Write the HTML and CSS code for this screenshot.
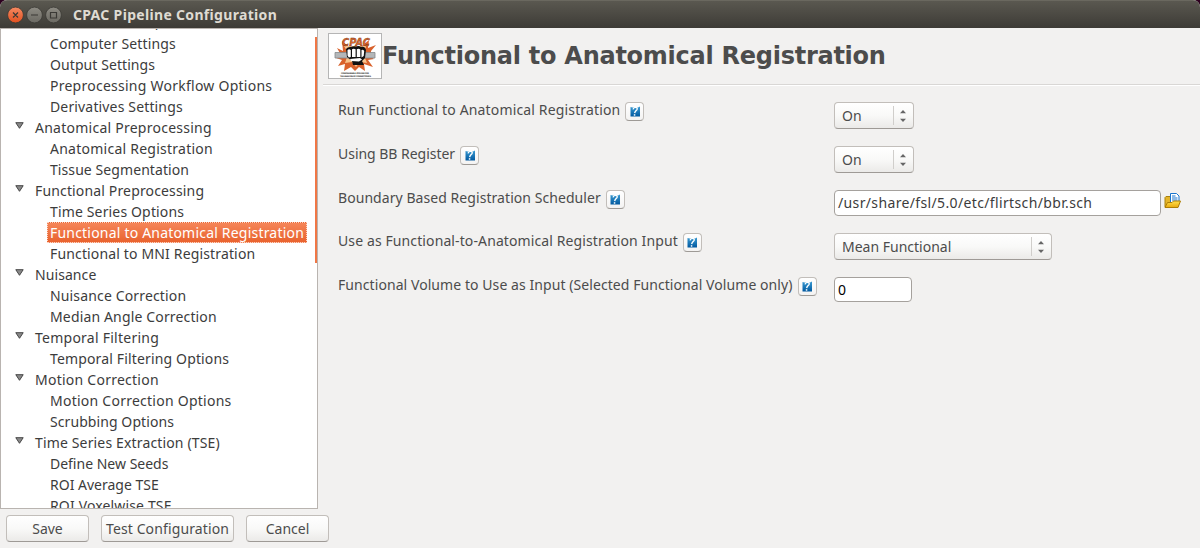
FILE: index.html
```html
<!DOCTYPE html>
<html lang="en">
<head>
<meta charset="utf-8">
<title>CPAC Pipeline Configuration</title>
<link rel="stylesheet" href="styles.css">
</head>
<body>
<svg width="0" height="0" class="defs">
  <defs>
    <linearGradient id="blue" x1="0" y1="0" x2="0" y2="1"><stop offset="0" stop-color="#3b9bd2"/><stop offset="1" stop-color="#00589f"/></linearGradient>
    <linearGradient id="gold" x1="0" y1="0" x2="0" y2="1"><stop offset="0" stop-color="#ffe14e"/><stop offset="1" stop-color="#e9a90c"/></linearGradient>
    <symbol id="help" viewBox="0 0 10 11">
      <path d="M.5 1l2 .5h5.500l2-1V10.500H.5z" fill="url(#blue)"/>
      <path d="M3 3.400C3.400 1.800 4.400 1.400 5.500 1.400c1.400 0 2 .7 1.600 1.900C6.600 4.600 5 5 4.700 7.200" fill="none" stroke="#fff" stroke-width="1.400"/>
      <rect x="3.800" y="8.200" width="1.500" height="1.500" fill="#fff"/>
    </symbol>
    <symbol id="spin" viewBox="0 0 6 12"><path d="M0 3.300 3 0l3 3.300zM0 8.700 3 12l3-3.300z" fill="#666"/></symbol>
    <symbol id="tri" viewBox="0 0 9 7"><path d="M.8.700h7.400L4.500 6.300z" fill="#8a8a8a" stroke="#454545"/></symbol>
  </defs>
</svg>
<div class="window">
  <header class="titlebar">
    <svg class="controls" width="56" height="18" viewBox="0 0 56 18">
      <defs><linearGradient id="cl" x1="0" y1="0" x2="0" y2="1"><stop offset="0" stop-color="#f58a62"/><stop offset="1" stop-color="#e2501f"/></linearGradient>
      <linearGradient id="gr" x1="0" y1="0" x2="0" y2="1"><stop offset="0" stop-color="#8d8b83"/><stop offset="1" stop-color="#6b6962"/></linearGradient></defs>
      <circle cx="9.500" cy="9" r="7.900" fill="url(#cl)" stroke="#3b3a35" stroke-width=".8"/>
      <circle cx="28.500" cy="9" r="7.900" fill="url(#gr)" stroke="#3b3a35" stroke-width=".8"/>
      <circle cx="47.500" cy="9" r="7.900" fill="url(#gr)" stroke="#3b3a35" stroke-width=".8"/>
      <path d="M7 6.500l5 5m0-5l-5 5M25 9h7M44.500 6.500h6v5.500h-6z" fill="none" stroke="#3a3935" stroke-width="1.200"/>
    </svg>
    <h1 class="caption">CPAC Pipeline Configuration</h1>
  </header>
  <div class="body">
    <aside class="side">
      <nav class="tree">
        <ul class="items">
          <li class="group first"><svg class="tri"><use href="#tri"/></svg><span>Environment Setup</span></li>
          <li class="leaf"><span>Computer Settings</span></li>
          <li class="leaf tight"><span>Output Settings</span></li>
          <li class="leaf wide"><span>Preprocessing Workflow Options</span></li>
          <li class="leaf"><span>Derivatives Settings</span></li>
          <li class="group wide"><svg class="tri"><use href="#tri"/></svg><span>Anatomical Preprocessing</span></li>
          <li class="leaf wide"><span>Anatomical Registration</span></li>
          <li class="leaf tight"><span>Tissue Segmentation</span></li>
          <li class="group"><svg class="tri"><use href="#tri"/></svg><span>Functional Preprocessing</span></li>
          <li class="leaf"><span>Time Series Options</span></li>
          <li class="leaf selected"><span>Functional to Anatomical Registration</span></li>
          <li class="leaf"><span>Functional to MNI Registration</span></li>
          <li class="group tight"><svg class="tri"><use href="#tri"/></svg><span>Nuisance</span></li>
          <li class="leaf"><span>Nuisance Correction</span></li>
          <li class="leaf"><span>Median Angle Correction</span></li>
          <li class="group wide"><svg class="tri"><use href="#tri"/></svg><span>Temporal Filtering</span></li>
          <li class="leaf"><span>Temporal Filtering Options</span></li>
          <li class="group wide"><svg class="tri"><use href="#tri"/></svg><span>Motion Correction</span></li>
          <li class="leaf wide"><span>Motion Correction Options</span></li>
          <li class="leaf tight"><span>Scrubbing Options</span></li>
          <li class="group"><svg class="tri"><use href="#tri"/></svg><span>Time Series Extraction (TSE)</span></li>
          <li class="leaf none"><span>Define New Seeds</span></li>
          <li class="leaf none"><span>ROI Average TSE</span></li>
          <li class="leaf"><span>ROI Voxelwise TSE</span></li>
        </ul>
        <div class="scroll-thumb"></div>
      </nav>
      <div class="actions">
        <button class="btn save">Save</button>
        <button class="btn test">Test Configuration</button>
        <button class="btn cancel">Cancel</button>
      </div>
    </aside>
    <main class="main">
      <div class="head">
        <svg class="logo" width="54" height="46" viewBox="0 0 54 46">
          <rect x=".5" y=".5" width="53" height="45" fill="#fff" stroke="#b5b5b5"/>
          <path d="M14 8l6 5 14 0 7-6-1 8 8-3-5 6v6l3 2-6 1 5 7-9-3 1 7-6-4-4 4-4-4-7 4 1-7-7 2 4-6-6-2 5-3-4-7 6 3z" fill="#d9622c"/>
          <path d="M16 13h22l-1 5 4 3-4 4 2 5-7-1-4 5-4-5-7 1 2-6-4-3 4-3z" fill="#f7c48c"/>
          <path d="M7 19.500h40v5.500H7z" fill="#b4b7b9" stroke="#85888a" stroke-width=".8"/>
          <path d="M18 16q2-2.500 5-2 2-1 5-.5 3-1 5 .5 4-1 5 3l-1 8-3 3 2 4H25l-1-4-5-4z" fill="#111"/>
          <path d="M19.500 17q1.500-1.500 3.300 0v7l-2 .5-1.300-2zM24 16.200q1.800-1 3.600 0v7.800H24zM28.800 16.200q1.800-1 3.500.3V24h-3.500zM33.500 17q1.500-1 2.700 1l-.5 5-2.200 1.500zM22 26l10-1 2 1.500-3 2-8-.5z" fill="#fff"/>
          <text x="14" y="13" class="logo-word" textLength="28" lengthAdjust="spacingAndGlyphs">CPAC</text>
          <text x="13" y="40.500" class="logo-tag" textLength="28">CONFIGURABLE PIPELINE FOR</text>
          <text x="12" y="43.500" class="logo-tag" textLength="31">THE ANALYSIS OF CONNECTOMES</text>
        </svg>
        <h2 class="title">Functional to Anatomical Registration</h2>
      </div>
      <form class="form">
        <div class="row"><label class="label l1">Run Functional to Anatomical Registration</label><span class="help"><svg><use href="#help"/></svg></span></div>
        <div class="field"><div class="select short"><span>On</span><i class="sep"></i><svg class="spin"><use href="#spin"/></svg></div></div>
        <div class="row"><label class="label l2">Using BB Register</label><span class="help"><svg><use href="#help"/></svg></span></div>
        <div class="field"><div class="select short"><span>On</span><i class="sep"></i><svg class="spin"><use href="#spin"/></svg></div></div>
        <div class="row"><label class="label l3">Boundary Based Registration Scheduler</label><span class="help"><svg><use href="#help"/></svg></span></div>
        <div class="field"><div class="input path"><span>/usr/share/fsl/5.0/etc/flirtsch/bbr.sch</span></div>
          <svg class="folder" width="17" height="16" viewBox="0 0 17 16">
            <path d="M1 14V4.500l1-1h4l1 1.500h7V14z" fill="#e5b52a" stroke="#a9820c"/>
            <path d="M6.500 10V.5h6l2.500 2.500V10z" fill="#fff" stroke="#1874cd"/><path d="M8 3h3.500M8 5h5.500M8 7h5.500" stroke="#1874cd"/>
            <path d="M1 14.500l2.500-5H8l1.500-1.500h7l-2.500 6.500z" fill="url(#gold)" stroke="#ad7d06"/>
          </svg>
        </div>
        <div class="row"><label class="label l4">Use as Functional-to-Anatomical Registration Input</label><span class="help"><svg><use href="#help"/></svg></span></div>
        <div class="field"><div class="select long"><span>Mean Functional</span><i class="sep"></i><svg class="spin"><use href="#spin"/></svg></div></div>
        <div class="row"><label class="label l5">Functional Volume to Use as Input (Selected Functional Volume only)</label><span class="help"><svg><use href="#help"/></svg></span></div>
        <div class="field"><div class="input num"><span>0</span></div></div>
      </form>
    </main>
  </div>
</div>
</body>
</html>
```
FILE: styles.css
```css
* { box-sizing: border-box; }
body { margin: 0; background: #2c001e; font: 14px/21px "Noto Sans", "Open Sans", sans-serif; color: #4c4c4c; }
.defs { position: absolute; }
.window { width: 1200px; height: 548px; display: flex; flex-direction: column; background: #f2f1f0; border-radius: 7px 7px 0 0; overflow: hidden; }
.titlebar { height: 28px; flex: none; display: flex; align-items: center; padding-left: 6px; gap: 11px; background: linear-gradient(#5a5850, #3d3b36); border-top: 1px solid #6a685f; }
.caption { margin: 0; font-size: 14px; line-height: 20px; font-weight: 700; letter-spacing: .32px; color: #dfdbd2; }
.body { flex: 1; display: flex; min-height: 0; }
.side { width: 318px; flex: none; display: flex; flex-direction: column; }
.tree { height: 481px; position: relative; overflow: hidden; background: #fff; border: 1px solid #b9b4b0; color: #3c3c3c; letter-spacing: .15px; }
.items { list-style: none; margin: -17px 0 0; padding: 0; }
.group, .leaf { height: 21px; display: flex; white-space: nowrap; }
.group { padding-left: 14px; gap: 11px; }
.leaf { padding-left: 49px; }
.first { line-height: 17px; }
.none { letter-spacing: 0; }
.tight { letter-spacing: .08px; }
.wide { letter-spacing: .25px; }
.tri { width: 9px; height: 7px; margin-top: 5px; }
.selected span { margin-left: -3px; padding-left: 2px; width: 260px; line-height: 19px; letter-spacing: .2px; background: linear-gradient(#f58558, #e9632f); border: 1px dotted #fbd5c5; color: #fff; }
.scroll-thumb { position: absolute; right: -1px; top: 8px; width: 3px; height: 226px; background: #f07746; }
.actions { display: flex; padding: 6px 0 0 6px; gap: 12px; }
.btn { height: 27px; flex: none; padding: 0; font: inherit; color: #4c4c4c; border: 1px solid #c2beba; border-bottom-color: #9e9a96; border-radius: 4px; background: linear-gradient(#fff, #f9f9f8 50%, #ebeae8); white-space: nowrap; }
.save, .cancel { width: 83px; }
.test { width: 133px; letter-spacing: .12px; }
.main { flex: 1; padding-left: 5px; }
.head { height: 57px; display: flex; padding: 5px 0 0 5px; border-bottom: 1px solid #d9d7d5; box-shadow: 0 1px #fff; }
.title { margin: 0; font: 700 24px/46px "DejaVu Sans", sans-serif; color: #4c4c4c; letter-spacing: -.26px; white-space: nowrap; }
.logo-word { font: italic 900 11px "DejaVu Sans", sans-serif; fill: #d9682c; stroke: #682c12; stroke-width: .35px; }
.logo-tag { font: 700 2.2px "DejaVu Sans", sans-serif; fill: #444; }
.form { display: grid; grid-template-columns: 496px 1fr; grid-template-rows: 44px 44px 43px 44px 44px; padding: 17px 0 0 15px; }
.row { display: flex; align-items: flex-start; gap: 5px; white-space: nowrap; }
.label { line-height: 20px; margin-top: -2px; }
.l1 { letter-spacing: .15px; }
.l2 { letter-spacing: -.03px; }
.l3 { letter-spacing: .06px; }
.l4 { letter-spacing: .11px; }
.l5 { letter-spacing: .07px; }
.help { width: 19px; height: 19px; display: flex; align-items: center; justify-content: center; border: 1px solid #c2beba; border-bottom-color: #9e9a96; border-radius: 4px; background: linear-gradient(#fff, #f4f3f2); }
.help svg { width: 10px; height: 11px; }
.field { display: flex; gap: 4px; }
.select { height: 27px; display: flex; align-items: center; border: 1px solid #c2beba; border-bottom-color: #9e9a96; border-radius: 4px; background: linear-gradient(#fff, #f9f9f8 50%, #ebeae8); padding: 0 7px; }
.short { width: 80px; }
.long { width: 218px; }
.sep { width: 1px; height: 19px; margin: 0 6px 0 auto; background: #d0cecb; }
.spin { width: 6px; height: 12px; }
.input { height: 26px; line-height: 24px; padding-left: 3px; border: 1px solid #a5a19d; border-radius: 4px; background: #fff; color: #3c3c3c; }
.path { width: 327px; letter-spacing: .36px; }
.num { width: 78px; height: 25px; color: #000; }
.folder { margin: 3px 0 0 -1px; }
```
